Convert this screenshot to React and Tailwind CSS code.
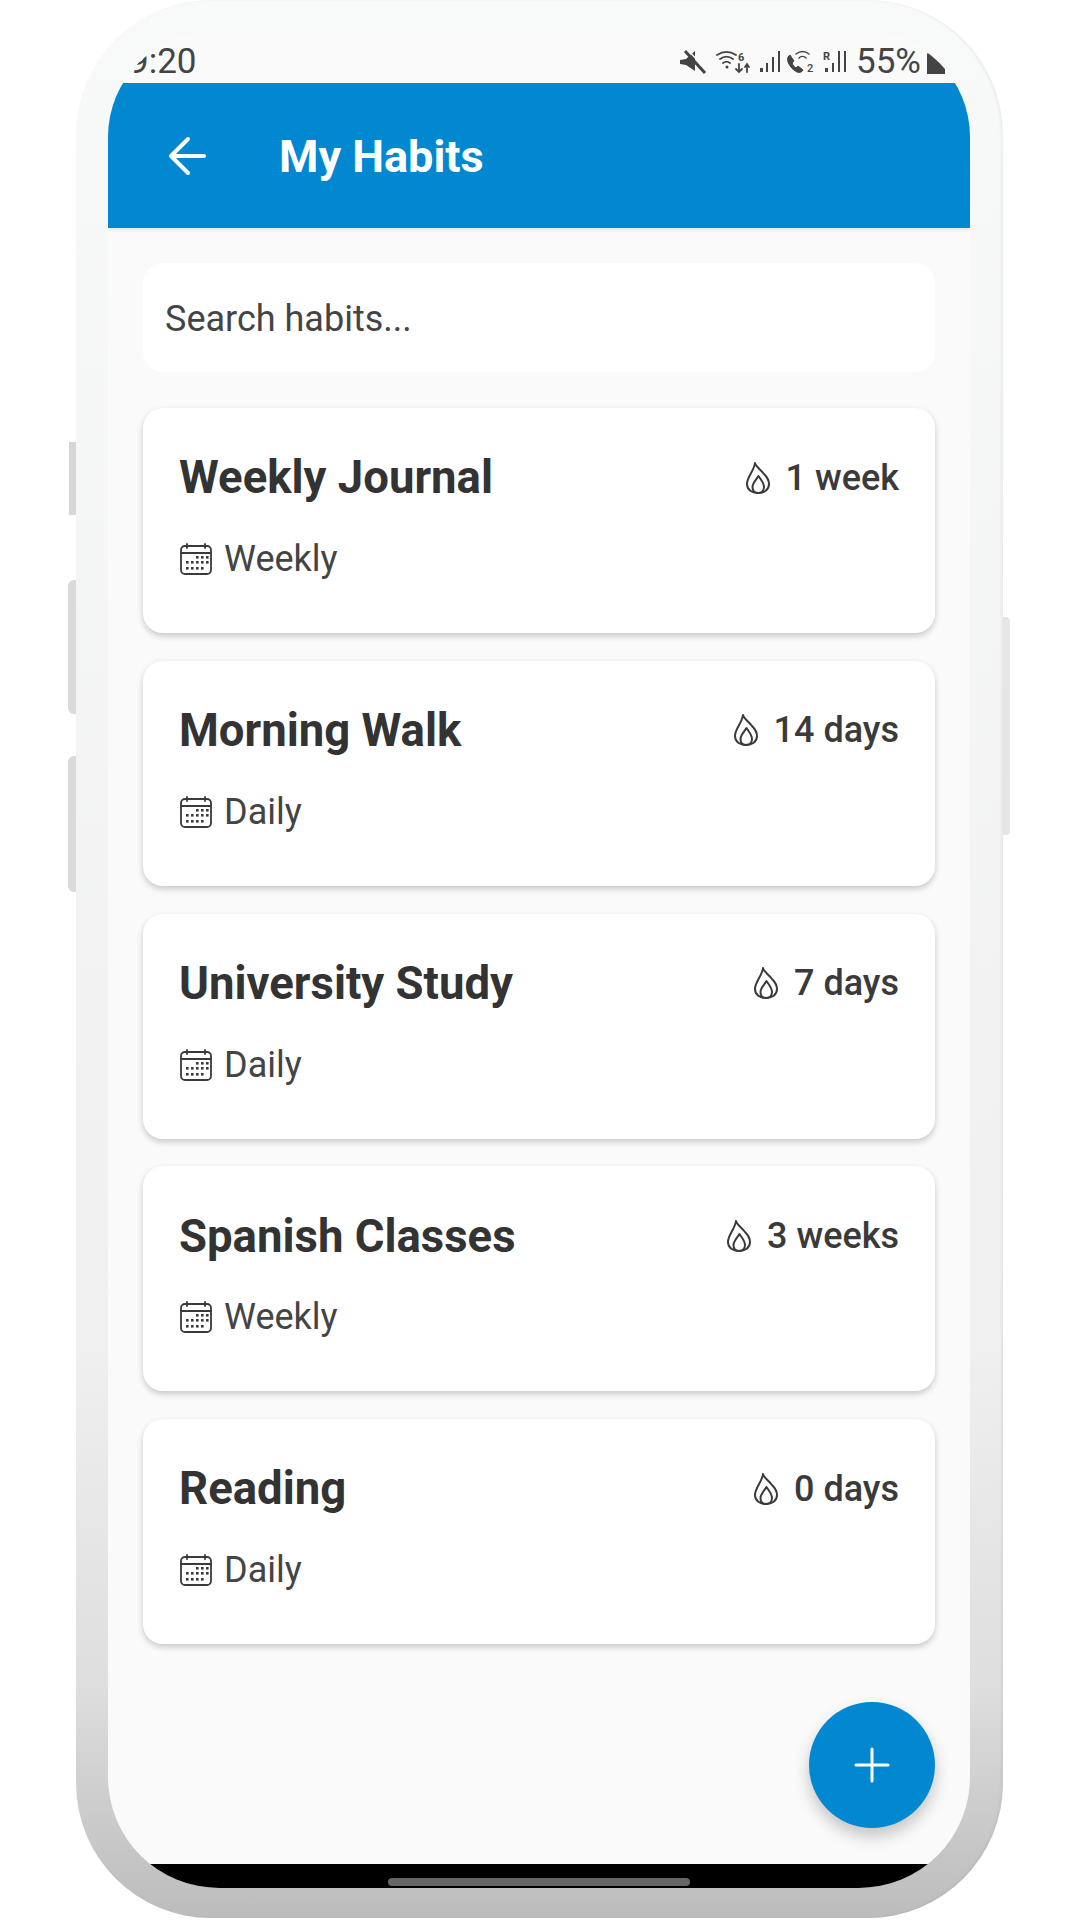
import React from 'react';

const habits = [
    { name: 'Weekly Journal', streak: '1 week', period: 'Weekly' },
    { name: 'Morning Walk', streak: '14 days', period: 'Daily' },
    { name: 'University Study', streak: '7 days', period: 'Daily' },
    { name: 'Spanish Classes', streak: '3 weeks', period: 'Weekly' },
    { name: 'Reading', streak: '0 days', period: 'Daily' },
];

const FlameIcon = () => (
    <svg width="24" height="32" viewBox="0 0 24 32" fill="none" stroke="#3a3a3a" strokeWidth="2" strokeLinejoin="round" strokeLinecap="round">
        <path d="M9 1c1 4 5 6 9 11 4 4 5 8 5 10 0 6-5 9-11 9S1 28 1 22C1 15 8 9 9 1z" />
        <path d="M12.500 14c2.500 4 5.500 7 5.500 11 0 4-3 6-6 6s-5.500-2-5.500-6c0-4 3.500-7 6-11z" />
    </svg>
);

const CalendarIcon = () => (
    <svg width="32" height="32" viewBox="0 0 32 32" fill="none" stroke="#3a3a3a" strokeWidth="1.800" className="ml-[1px]">
        <rect x="1" y="3" width="30" height="28" rx="4" />
        <path d="M1 10h30M7 1v4M25 1v4" strokeLinecap="round" />
        <g fill="#3a3a3a" stroke="none">
            <rect x="16" y="13" width="2.600" height="2.600" />
            <rect x="21" y="13" width="2.600" height="2.600" />
            <rect x="26" y="13" width="2.600" height="2.600" />
            <rect x="6" y="18" width="2.600" height="2.600" />
            <rect x="11" y="18" width="2.600" height="2.600" />
            <rect x="16" y="18" width="2.600" height="2.600" />
            <rect x="21" y="18" width="2.600" height="2.600" />
            <rect x="26" y="18" width="2.600" height="2.600" />
            <rect x="6" y="24" width="2.600" height="2.600" />
            <rect x="11" y="24" width="2.600" height="2.600" />
            <rect x="16" y="24" width="2.600" height="2.600" />
            <rect x="21" y="24" width="2.600" height="2.600" />
        </g>
    </svg>
);

const StatusIcons = () => (
    <svg width="170" height="26" viewBox="0 0 170 26" className="shrink-0" fill="#444" stroke="none">
        {/* mute */}
        <path d="M0 11l6-1 9-8v20l-9-6-6-1z" />
        <path d="M5 2l20 22" stroke="#444" strokeWidth="3" />
        <path d="M8 1l19 21" stroke="#fafafa" strokeWidth="1.500" />
        {/* wifi */}
        <g fill="none" stroke="#444" strokeWidth="1.800" strokeLinecap="round">
            <path d="M37 6c6-4 13-4 19 0M40 10c4-3 9-3 13 0M43 14c2-1.500 5-1.500 7 0" />
            <path d="M59 15v8M56 20l3 3 3-3M67 23v-8M65 18l2-3 2 3" />
        </g>
        <circle cx="47" cy="18" r="1.500" />
        <text x="58" y="12" fontFamily="Roboto" fontWeight="700" fontSize="11">6</text>
        {/* signal */}
        <rect x="80" y="19" width="3" height="4" />
        <rect x="86" y="14" width="2" height="9" />
        <rect x="92" y="8" width="2" height="15" />
        <rect x="98" y="2" width="2" height="21" />
        {/* wifi calling */}
        <path d="M110 6c-2 1-3 3-2 7 2 5 5 8 9 10 3 1 5 0 6-2l-5-4-2 2c-2-1-3-3-4-5l2-2z" stroke="#444" strokeWidth="1" />
        <g fill="none" stroke="#444" strokeWidth="1.500" strokeLinecap="round">
            <path d="M116 5c4-3 9-3 13 0M119 9c2-2 5-2 7 0" />
        </g>
        <text x="127" y="23" fontFamily="Roboto" fontWeight="500" fontSize="11">2</text>
        {/* roaming signal */}
        <text x="143" y="11" fontFamily="Roboto" fontWeight="700" fontSize="11">R</text>
        <rect x="145" y="19" width="3" height="4" />
        <rect x="152" y="14" width="2" height="9" />
        <rect x="158" y="2" width="2" height="21" />
        <rect x="164" y="2" width="2" height="21" />
    </svg>
);

const HabitCard = ({ habit }) => (
    <div className="flex h-[225px] flex-col rounded-[20px] bg-white px-[36px] shadow-[0_3px_6px_rgba(0,0,0,0.2)]">
        <div className="mt-[42px] flex h-[56px] items-center justify-between">
            <span className="text-[45.500px] font-bold leading-none text-[#333]">{habit.name}</span>
            <span className="-mt-[1px] flex items-center gap-[16px] text-[36px] font-medium leading-none text-[#3a3a3a]">
                <FlameIcon />
                {habit.streak}
            </span>
        </div>
        <div className="mt-[33px] flex h-[40px] items-center gap-[12px] text-[36px] leading-none text-[#444]">
            <CalendarIcon />
            {habit.period}
        </div>
    </div>
);

export default function App() {
    return (
        <div className="h-[1920px] bg-white pl-[76px] font-['Roboto',sans-serif]">
            <div className="relative h-[1918px] w-[927px] rounded-[135px] bg-[linear-gradient(180deg,#f8f9f9_0%,#f0f0f0_70%,#dedede_88%,#bcbcbc_100%)] pb-[30px] pl-[32px] pr-[33px] pt-[32px] shadow-[inset_-2px_0_3px_rgba(0,0,0,0.05)]">
                {/* side buttons */}
                <div className="absolute left-[-7px] top-[442px] h-[73px] w-[7px] bg-[#d6d6d6]" />
                <div className="absolute left-[-8px] top-[580px] h-[134px] w-[8px] rounded-l-[6px] bg-[#dadada]" />
                <div className="absolute left-[-8px] top-[756px] h-[136px] w-[8px] rounded-l-[6px] bg-[#dadada]" />
                <div className="absolute right-[-7px] top-[617px] h-[218px] w-[7px] rounded-r-[4px] bg-[#e6e6e6]" />

                <div className="relative flex h-full flex-col overflow-hidden rounded-b-[111px] rounded-t-[105px] bg-[#fafafa]">
                    {/* status bar */}
                    <div className="flex h-[51px] shrink-0 items-center justify-between pl-[21px] pt-[8px] text-[35px] leading-none text-[#444]">
                        <span>9:20</span>
                        <div className="flex items-center">
                            <StatusIcons />
                            <span className="ml-[6px]">55%</span>
                            <div className="ml-[6px] mr-[25px] mt-[2px] h-[22px] w-[18px] rounded-t-[3px] bg-[#444]" />
                        </div>
                    </div>

                    {/* header */}
                    <div className="flex h-[145px] shrink-0 items-center bg-[#0288d1] pl-[60px] shadow-[0_2px_4px_rgba(0,0,0,0.08)]">
                        <svg width="40" height="40" viewBox="0 0 40 40" fill="none" stroke="white" strokeWidth="4" strokeLinecap="round" strokeLinejoin="round" className="mt-[1px]">
                            <path d="M36 20H4M20 3L3 20l17 17" />
                        </svg>
                        <h1 className="ml-[71px] pt-[2px] text-[45px] font-bold leading-none text-white">My Habits</h1>
                    </div>

                    {/* content */}
                    <div className="flex flex-1 flex-col px-[35px] pt-[35px]">
                        <div className="flex h-[109px] shrink-0 items-center rounded-[20px] bg-white px-[22px] pt-[2px] text-[36px] text-[#444]">
                            Search habits...
                        </div>
                        <div className="mt-[36px] flex flex-col gap-[27.750px]">
                            {habits.map((habit) => (
                                <HabitCard key={habit.name} habit={habit} />
                            ))}
                        </div>
                    </div>

                    {/* nav bar */}
                    <div className="flex h-[24px] shrink-0 justify-center bg-black pt-[14px]">
                        <div className="h-[8px] w-[302px] rounded-full bg-[#666]" />
                    </div>

                    {/* fab */}
                    <button className="absolute bottom-[60px] right-[35px] flex h-[126px] w-[126px] items-center justify-center rounded-full bg-[#0288d1] shadow-[0_8px_16px_rgba(0,0,0,0.22)]">
                        <svg width="36" height="36" viewBox="0 0 36 36" stroke="white" strokeWidth="3" strokeLinecap="round">
                            <path d="M18 2v32M2 18h32" />
                        </svg>
                    </button>
                </div>
            </div>
        </div>
    );
}
